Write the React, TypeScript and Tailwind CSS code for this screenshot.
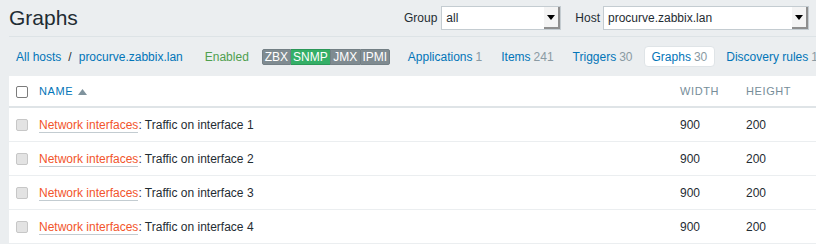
import React from 'react';

const font = { fontFamily: '"Liberation Sans", Arial, sans-serif' };

const SelectBox = ({ value, width }: { value: string; width: string }) => (
  <div className={`flex h-[24px] ${width} border border-[#c4ccd1] bg-white`}>
    <div className="flex-1 pl-[4px] text-[12px] leading-[22px] text-[#1f2c33]">{value}</div>
    <div className="flex w-[16px] items-center justify-center border-r-2 border-b-2 border-r-[#8f8f8f] border-b-[#8f8f8f] bg-[#f4f4f4]">
      <svg width="8" height="5" viewBox="0 0 8 5">
        <path d="M0 0h8L4 5z" fill="#000" />
      </svg>
    </div>
  </div>
);

const Tab = ({ label, count, active }: { label: string; count: string; active?: boolean }) => (
  <div
    className={`flex h-[21px] items-center px-[7px] text-[12px] ${
      active ? 'rounded-sm border border-[#dfe4e7] bg-white' : 'border border-transparent'
    }`}
  >
    <span className="text-[#0275b8]">{label}</span>
    <span className="ml-[3px] text-[#8a9aa3]">{count}</span>
  </div>
);

const Checkbox = ({ header }: { header?: boolean }) => (
  <div
    className={`h-[12px] w-[12px] rounded-[2px] border ${
      header ? 'border-[#7c7c7c] bg-white' : 'border-[#c7c7c7] bg-[#e3e3e3]'
    }`}
  />
);

const rows = [1, 2, 3, 4];

export default function App() {
  return (
    <div className="h-[244px] w-[816px] overflow-hidden bg-[#ebeef0] text-[#1f2c33]" style={font}>
      <div className="ml-[9px] flex h-[37px] items-center justify-between border-b border-[#dde3e6] pr-[7px]">
        <h1 className="mt-[-1px] text-[21px] leading-none">Graphs</h1>
        <div className="flex items-center text-[12px]">
          <span className="mr-[4px]">Group</span>
          <SelectBox value="all" width="w-[120px]" />
          <span className="ml-[14px] mr-[3px]">Host</span>
          <SelectBox value="procurve.zabbix.lan" width="w-[206px]" />
        </div>
      </div>

      <div className="flex h-[39px] items-center whitespace-nowrap pl-[16px] text-[12px]">
        <span className="text-[#0275b8]">All hosts</span>
        <span className="mx-[7px]">/</span>
        <span className="text-[#0275b8]">procurve.zabbix.lan</span>
        <span className="ml-[22px] text-[#4f9f4f]">Enabled</span>
        <div className="ml-[13px] flex h-[16px] rounded-[2px] text-[12px] leading-[14px] text-white">
          <span className="w-[29px] shrink-0 rounded-l-[2px] border border-[#737f85] bg-[#7f8b91] text-center">ZBX</span>
          <span className="w-[39px] shrink-0 border-y border-[#2b9758] bg-[#34af67] text-center">SNMP</span>
          <span className="w-[30px] shrink-0 border-y border-l border-[#737f85] bg-[#7f8b91] text-center">JMX</span>
          <span className="w-[30px] shrink-0 rounded-r-[2px] border border-[#737f85] bg-[#7f8b91] text-center">IPMI</span>
        </div>
        <div className="ml-[10px] flex items-center gap-[3px]">
          <Tab label="Applications" count="1" />
          <Tab label="Items" count="241" />
          <Tab label="Triggers" count="30" />
          <Tab label="Graphs" count="30" active />
          <Tab label="Discovery rules" count="1" />
        </div>
      </div>

      <div className="ml-[9px] bg-white text-[12px]">
        <div className="grid h-[32px] grid-cols-[30px_641px_66px_1fr] items-center border-b-2 border-[#dfe4e7] pt-[1px]">
          <div className="pl-[7px]">
            <Checkbox header />
          </div>
          <div className="flex items-center text-[11px] tracking-[0.6px] text-[#0275b8]">
            NAME
            <svg className="ml-[5px]" width="9" height="6" viewBox="0 0 9 6">
              <path d="M0 6h9L4.5 0z" fill="#7f939d" />
            </svg>
          </div>
          <div className="text-[11px] tracking-[0.6px] text-[#768d99]">WIDTH</div>
          <div className="text-[11px] tracking-[0.6px] text-[#768d99]">HEIGHT</div>
        </div>
        {rows.map((n) => (
          <div
            key={n}
            className="grid h-[34px] grid-cols-[30px_641px_66px_1fr] items-center border-b border-[#ebeef0]"
          >
            <div className="pl-[7px]">
              <Checkbox />
            </div>
            <div>
              <span className="border-b border-[#c3ccd1] text-[#f2552c]">Network interfaces</span>
              <span>: Traffic on interface {n}</span>
            </div>
            <div>900</div>
            <div>200</div>
          </div>
        ))}
      </div>
    </div>
  );
}
